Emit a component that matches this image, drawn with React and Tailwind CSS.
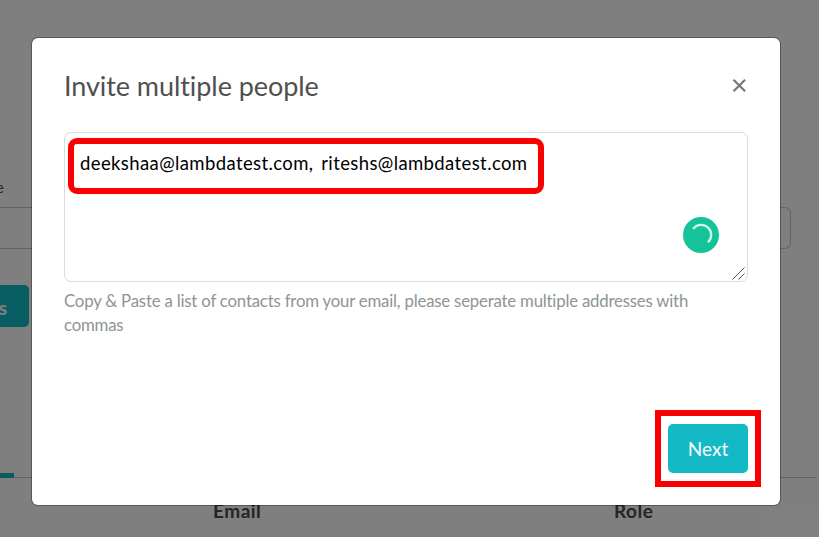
function Backdrop() {
  return (
    <div className="flex h-[537px] flex-col overflow-hidden bg-white">
      <div className="flex h-[207px] items-end pb-[8px]">
        <span className="-ml-[5px] w-[9px] text-right text-base leading-6 text-[#505050]">e</span>
      </div>
      <div className="h-[42px] w-[791px] shrink-0 rounded-r-[6px] border border-l-0 border-[#c8c8c8]" />
      <div className="mt-9 flex h-[42px] w-[29px] shrink-0 items-center justify-end rounded-r-[5px] bg-[#0ebac5] pr-[22px] text-[19px] font-bold text-white">
        <span className="pt-[4px]">s</span>
      </div>
      <div className="mr-[3px] mt-[146px] flex h-[5px] shrink-0 items-start border-b border-[#c4c4c4]">
        <div className="h-[5px] w-[14px] shrink-0 bg-[#0ebac5]" />
      </div>
      <div className="flex pt-[21px] text-[19px] font-bold leading-6 tracking-[0.5px] text-[#4a4a4a]">
        <span className="ml-[213px] w-[401px]">Email</span>
        <span>Role</span>
      </div>
    </div>
  );
}

function Spinner() {
  return (
    <svg className="absolute left-[618px] top-[84px]" width="36" height="36" viewBox="0 0 36 36" fill="none">
      <circle cx="18" cy="18" r="18" fill="#15c39a" />
      <path d="M10.7 11.2A9.7 9.7 0 0 1 25.6 24.6" stroke="#d3f8ee" strokeWidth="2.3" strokeLinecap="round" />
    </svg>
  );
}

function InviteDialog() {
  return (
    <section className="flex h-[467px] w-[748px] flex-col rounded-[6px] bg-white px-8 shadow-[0_0_0_1px_rgba(0,0,0,0.3)]">
      <header className="flex h-[94px] items-center justify-between pt-px">
        <h1 className="text-[27px] leading-8 tracking-[-0.07px] text-[#505050]">Invite multiple people</h1>
        <svg className="mr-px" width="15" height="15" viewBox="0 0 15 15" stroke="#777" strokeWidth="2.2">
          <path d="M1.5 1.7L13.1 13.3M13.1 1.7L1.5 13.3" />
        </svg>
      </header>
      <div className="relative h-[150px] shrink-0 rounded-[7px] border border-[#dcdcdc] px-[15px] pt-[18px]">
        <p className="whitespace-pre text-[18.5px] leading-6 tracking-[0.39px] text-black [word-spacing:-1.2px]">deekshaa@lambdatest.com,  riteshs@lambdatest.com</p>
        <div className="absolute left-[3px] top-[5px] h-[56px] w-[476px] rounded-[9px] border-[6px] border-[#fb0000]" />
        <Spinner />
        <svg className="absolute bottom-0 right-0" width="16" height="16" viewBox="0 0 16 16" stroke="#555" strokeWidth="1">
          <path d="M1.5 14.5L13.5 2.5M7.5 14.5L13.5 8.5" />
        </svg>
      </div>
      <p className="mt-[7px] whitespace-nowrap text-[16.8px] leading-6 tracking-[-0.2px] text-[#8e9594]">
        Copy &amp; Paste a list of contacts from your email, please seperate multiple addresses with
        <br />
        commas
      </p>
      <footer className="-mr-[13px] mt-auto mb-[18px] flex justify-end">
        <div className="flex h-[77px] w-[106px] items-center border-[6px] border-[#fb0000] pl-[7px]">
          <button className="h-[49px] w-[80px] rounded-[5px] bg-[#13b9c5] pt-px text-[19px] text-white">Next</button>
        </div>
      </footer>
    </section>
  );
}

export default function App() {
  return (
    <main className="relative h-[537px] w-[819px] overflow-hidden font-[Lato,sans-serif] [font-variant-ligatures:none]">
      <Backdrop />
      <div className="absolute inset-0 bg-black/50 pl-8 pt-[38px]">
        <InviteDialog />
      </div>
    </main>
  );
}
